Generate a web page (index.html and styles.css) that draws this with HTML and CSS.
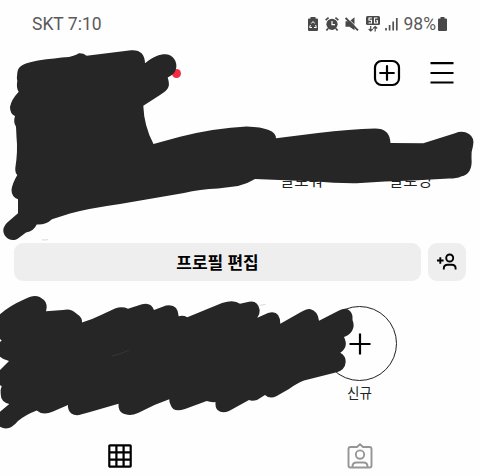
FILE: index.html
```html
<!DOCTYPE html>
<html lang="ko">
<head>
<meta charset="utf-8">
<title>프로필</title>
<link rel="stylesheet" href="styles.css">
</head>
<body>
<main class="screen">
  <header class="status">
    <span class="carrier">SKT 7:10</span>
    <div class="indicators">
      <svg width="10" height="14" viewBox="0 0 10 14"><path fill="#484848" d="M2.500 0h5v1.500H9q1 0 1 1V13q0 1-1 1H1q-1 0-1-1V2.500q0-1 1-1h1.500z"/><path d="M3.300 6.500L5 4.500l1.700 2M7.600 8l.8 2.500H6M4 10.500H1.600L2.400 8" fill="none" stroke="#fff" stroke-width="1"/></svg>
      <svg class="alarm" width="14" height="14" viewBox="0 0 14 14"><circle cx="7" cy="7.300" r="5.600" fill="#484848"/><path d="M.6 3.200L3.600.7M13.400 3.200L10.400.7M3 11.500l-1.600 2M11 11.500l1.600 2" stroke="#484848" stroke-width="1.700"/><path d="M7 4v3.700h3" fill="none" stroke="#fff" stroke-width="1.200"/></svg>
      <svg class="mute" width="14" height="14" viewBox="0 0 14 14"><path fill="#484848" d="M.5 4.300h4L9.500.3v13L4.500 9.700h-4z"/><path d="M1.600 0l12.400 12.400" stroke="#fefefe" stroke-width="1"/><path d="M.6 1l12.400 12.400" stroke="#484848" stroke-width="1.800"/></svg>
      <svg class="network" width="14" height="16" viewBox="0 0 14 16"><rect width="14" height="9" rx="1.500" fill="#484848"/><path d="M6 2H3v2.200h2.500V7H2.500M11.500 2h-3v5h3V4.700H10" fill="none" stroke="#fff" stroke-width="1.100"/><path d="M4.700 10v5M2.700 13l2 2 2-2M9.200 15.500v-5M7.200 12.500l2-2 2 2" fill="none" stroke="#484848" stroke-width="1.200"/></svg>
      <svg class="signal" width="13" height="14" viewBox="0 0 13 14"><path d="M1 11v2.500M4.600 8v5.500M8.200 4.500v9M11.800 1v12.500" stroke="#505050" stroke-width="1.700"/></svg>
      <span class="percent">98%</span>
      <svg width="9" height="14" viewBox="0 0 9 14"><path fill="#484848" d="M2.500 0h4v1.500H8q1 0 1 1V13q0 1-1 1H1q-1 0-1-1V2.500q0-1 1-1h1.500z"/></svg>
    </div>
  </header>

  <nav class="topbar">
    <span class="unread"></span>
    <div class="top-actions">
      <svg width="28" height="28" viewBox="0 0 28 28" fill="none" stroke="#000" stroke-width="2.200"><rect x="2" y="2" width="24" height="24" rx="6.500"/><path d="M14 7.200v13.600M7.200 14h13.600" stroke-linecap="round"/></svg>
      <svg width="24" height="24" viewBox="0 0 24 24"><path d="M.5 2.200h23M.5 12h23M.5 21.500h23" stroke="#000" stroke-width="2.200"/></svg>
    </div>
  </nav>

  <section class="stats">
    <span>팔로워</span>
    <span>팔로잉</span>
  </section>

  <section class="actions">
    <button class="edit">프로필 편집</button>
    <button class="discover" aria-label="사람 찾아보기"><svg width="22" height="18" viewBox="0 0 22 18" fill="none" stroke="#000" stroke-width="1.900"><circle cx="13.700" cy="5" r="3.500"/><path d="M7.800 16.500v-1q0-3.700 3.800-3.700h4.200q3.800 0 3.800 3.700v1M1 7.500h6.600M4.300 4.200v6.600"/></svg></button>
  </section>

  <section class="highlights">
    <div class="new-item">
      <div class="ring"><svg width="22" height="22" viewBox="0 0 22 22"><path d="M11 .5v21M.5 11h21" stroke="#000" stroke-width="2.200"/></svg></div>
      <span>신규</span>
    </div>
  </section>

  <nav class="tabs">
    <div class="tab"><svg width="24" height="24" viewBox="0 0 24 24" fill="none" stroke="#000" stroke-width="2.200"><rect x="1.300" y="1.300" width="21.400" height="21.400" rx=".7"/><path d="M8.400 1v22M15.600 1v22M1 8.400h22M1 15.600h22"/></svg></div>
    <div class="tab"><svg width="26" height="26" viewBox="0 0 26 26" fill="none" stroke="#969696" stroke-width="1.900" stroke-linejoin="round"><path d="M3.500 4H10l3-2.800L16 4h6.500q2 0 2 2v16.500q0 2-2 2h-19q-2 0-2-2V6q0-2 2-2z"/><circle cx="13" cy="11.600" r="4.200"/><path d="M5.500 24.300v-.8q0-4 4-4h7q4 0 4 4v.8"/></svg></div>
  </nav>

  <svg class="marker" width="480" height="476" viewBox="0 0 480 476" fill="#262626">
    <path d="M17.300 73C18 65 25 63 38 60.500Q55 58 69 57Q77 55 79 53.300Q83 53 86.700 55.700L131 50.200C140 49.500 145 54 145 63.300C153 56.500 160 54.200 165 54.200C173 54.200 178 62 176 69Q174.500 74.500 167.700 77.500Q170 85 168 88Q166.500 91 160 95L143.300 105.700Q144 126 153.500 144L180 136.700Q215 128 246.700 126.500Q276 127.500 276 138.300L318 133Q350 129 375 128.500C385 128.500 390 133 390.500 143L423.300 143.300L455 133.200Q463 130 469 134Q475 138 473 146Q471 152 471.500 158Q473 174 461 176.500Q457 178.500 449 178.500L413 180.500Q385 181 356.700 183.300Q335 183.500 316 181.500L255 179Q247 184 238 186L218 188.500Q200 189 184 193L120 204Q88 208.500 70 213.500L52 219.300Q46 225 36.700 224.500Q34 231 26 232.500L18 238.500C11 243 3 237 3.300 230Q3.800 225 9 221L18 213.300V199.300Q11.500 197 11.500 190Q12 184 17.300 175Q15 173 15.300 168Q18 151 16.500 137L16 126.700Q13 122 15 116Q10 114 10 107Q11 100 18.700 91.700Q16 88 17.300 81Q16.500 78 17.300 73z"/>
    <path d="M0 314.300Q9 306 25 299C34 294 39 295.500 44 300Q48 304 46 311.300L63 310Q71 308 76 313.300Q83 318 82 322.500Q91 320 101 315L115 308.500Q122 306 128 308.700L142 304.300Q151 302 154 310L166 305.600Q178 303.500 178.700 316.300Q183 315 187.300 317.300L222 303Q234 299 240 303.700L249 301.700Q258 300 259.700 310Q260 314 257.300 317.700L268 313Q280 309.500 280.300 323.700L301 312Q307 308.500 310 309Q318 311 319 320.700L339 310.500Q346 307 350 311Q353 314 352.500 320Q355 326 352 331Q349 335.500 344 337Q349 347 340.300 352.700Q346 356 345.700 362Q345 370 336.700 372.300L304 380.500Q297 383 289 389L276.700 396Q270 399.500 265 395L257 400Q252 401.500 249 400L229 411Q222 414 217.500 410Q215 407 215.500 402Q211 402.500 206.700 401L185 409Q173 413 170.700 405Q169 402 169.300 399.300L155 404.700L138 413Q130 416.500 123 413.500Q118 411 118.500 403.700L90 412L79 415Q71 416 68.700 410Q67.500 407 68 405L53 411.500Q43 416 36.700 410.500Q25 415 18 421Q9 432 0 426.700V411.700L9.300 404Q.7 402 .7 394Q0 390 1.700 386Q0 385.500 0 385V370L9 361Q3 359.500 0 356.700V342L1.700 340.500L0 339z"/>
    <path d="M112 356Q121 354 129 350" fill="none" stroke="#414141" stroke-width=".6"/>
    <path d="M259.500 305.500l6-1.300M42 239.800q3 .5 6-.2" fill="none" stroke="#c8c8c8" stroke-width=".7"/>
  </svg>
</main>
</body>
</html>
```

FILE: styles.css
```css
* { box-sizing: border-box; }
body {
  margin: 0;
  background: #fefefe;
  color: #222;
  font-family: Roboto, "Noto Sans CJK KR", sans-serif;
}
svg { display: block; flex: none; }
button { border: 0; padding: 0; color: #000; font: inherit; }
.screen {
  position: relative;
  width: 480px;
  height: 476px;
  overflow: hidden;
  display: flex;
  flex-direction: column;
}
.status {
  height: 48px;
  padding: 0 33px 0 32px;
  display: flex;
  align-items: center;
  justify-content: space-between;
  color: #5a5a5a;
}
.carrier { font-size: 17.5px; line-height: 48px; }
.indicators { display: flex; align-items: center; }
.alarm { margin-left: 7px; }
.mute { margin-left: 6px; }
.network { margin-left: 7px; }
.signal { margin-left: 5px; }
.percent { margin: 0 2px 0 6px; font-size: 17.5px; line-height: 48px; }
.topbar {
  height: 50px;
  padding: 0 26px 0 172px;
  display: flex;
  align-items: center;
  justify-content: space-between;
}
.unread { width: 9px; height: 9px; border-radius: 50%; background: #f52b43; }
.top-actions { display: flex; align-items: center; gap: 29px; }
.stats {
  height: 145px;
  padding: 72px 15px 0 247px;
  display: grid;
  grid-template-columns: repeat(2, 109px);
  text-align: center;
  font-size: 15.5px;
  line-height: 23px;
}
.actions { height: 38px; padding: 0 14px; display: flex; gap: 7px; }
.edit {
  flex: 1;
  padding-bottom: 2px;
  border-radius: 9px;
  background: #eee;
  font-size: 17px;
  font-weight: 700;
}
.discover {
  width: 38px;
  border-radius: 9px;
  background: #eee;
  display: flex;
  align-items: center;
  justify-content: center;
}
.highlights { height: 151px; padding: 25px 83px 0 0; display: flex; justify-content: flex-end; }
.new-item {
  width: 75px;
  display: flex;
  flex-direction: column;
  align-items: center;
  font-size: 13.5px;
  line-height: 24px;
}
.ring {
  width: 75px;
  height: 75px;
  border: 1px solid #222;
  border-radius: 50%;
  display: flex;
  align-items: center;
  justify-content: center;
}
.tabs { height: 44px; display: grid; grid-template-columns: 1fr 1fr; padding-top: 4px; }
.tab { display: flex; align-items: center; justify-content: center; }
.marker { position: absolute; inset: 0; }
```
